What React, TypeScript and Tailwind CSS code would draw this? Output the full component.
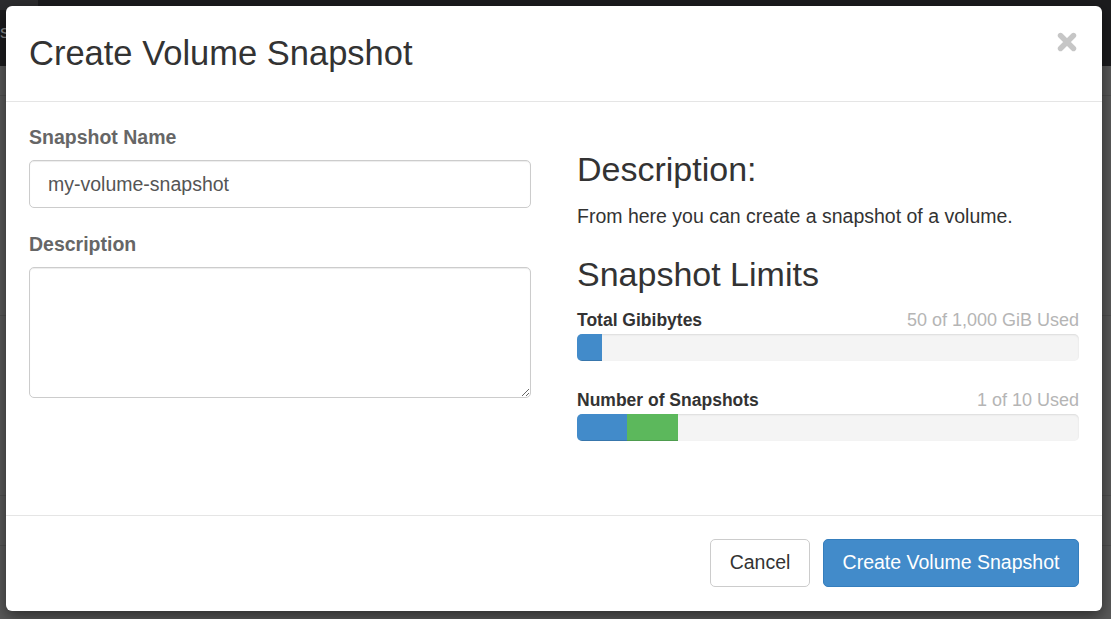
import React from "react";

function CloseIcon() {
  return (
    <svg width="20" height="20" viewBox="0 0 20 20" aria-hidden="true">
      <path d="M3.5 3.5 L16.5 16.5 M16.5 3.5 L3.5 16.5" stroke="#c6c6c6" strokeWidth="5.4" strokeLinecap="round" fill="none" />
    </svg>
  );
}

function Bar({ label, value, segs }: { label: string; value: string; segs: { w: number; c: string }[] }) {
  return (
    <div>
      <div className="flex items-baseline justify-between leading-[27px]">
        <span className="text-[17.5px] font-bold text-[#333]">{label}</span>
        <span className="text-[18px] text-[#b5b5b5]">{value}</span>
      </div>
      <div className="flex h-[27px] w-full overflow-hidden rounded-[5px] bg-[#f4f4f4] shadow-[inset_0_1px_2px_rgba(0,0,0,0.1)]">
        {segs.map((s, i) => (
          <div
            key={i}
            className="h-full shadow-[inset_0_-1px_0_rgba(0,0,0,0.15)]"
            style={{ width: `${s.w}px`, backgroundColor: s.c }}
          />
        ))}
      </div>
    </div>
  );
}

export default function App() {
  return (
    <div className="relative h-[619px] w-[1111px] overflow-hidden bg-[#595959] font-['Liberation_Sans',Arial,sans-serif]">
      {/* dimmed page behind the modal */}
      <div className="flex h-[66px] flex-col bg-[#1c1c1e]">
        <div className="flex h-[10px]">
          <div className="w-[38px] bg-[#2c2c2e]" />
        </div>
        <div className="pt-[12px] text-[19px] leading-[20px] text-[#8c8c8c]">s</div>
      </div>
      <div className="flex flex-col">
        <div className="h-[30px] border-b border-[#4f4f4f]" />
        <div className="h-[220px] border-b border-[#4f4f4f]" />
        <div className="h-[180px] border-b border-[#4f4f4f]" />
        <div className="h-[50px] border-b border-[#4f4f4f]" />
      </div>

      {/* modal overlay */}
      <div className="absolute left-[6px] top-[6px] flex h-[605px] w-[1096px] flex-col rounded-[6px] bg-white shadow-[0_5px_15px_rgba(0,0,0,0.5)]">
        <div className="flex h-[96px] shrink-0 items-start justify-between border-b border-[#e5e5e5] pl-[23px] pr-[25px]">
          <h4 className="pt-[27px] text-[34.5px] font-normal leading-[40px] text-[#333]">Create Volume Snapshot</h4>
          <button className="mt-[26px]">
            <CloseIcon />
          </button>
        </div>

        <div className="grid h-[413px] shrink-0 grid-cols-2 gap-x-[46px] px-[23px] pt-[21px]">
          <div>
            <label className="mb-[9px] block text-[19.5px] font-bold leading-[28px] text-[#666]">Snapshot Name</label>
            <input
              className="block h-[48px] w-full rounded-[5px] border border-[#ccc] px-[18px] text-[19.5px] text-[#555] shadow-[inset_0_1px_1px_rgba(0,0,0,0.075)] outline-none"
              defaultValue="my-volume-snapshot"
            />
            <label className="mb-[9px] mt-[22px] block text-[19.5px] font-bold leading-[28px] text-[#666]">Description</label>
            <textarea className="block h-[131px] w-full rounded-[5px] border border-[#ccc] px-[18px] py-[8px] text-[19.5px] text-[#555] shadow-[inset_0_1px_1px_rgba(0,0,0,0.075)] outline-none" />
          </div>

          <div>
            <h3 className="mb-[14px] mt-[28px] text-[34px] font-normal leading-[37px] text-[#333]">Description:</h3>
            <p className="text-[19.5px] leading-[28px] text-[#333]">From here you can create a snapshot of a volume.</p>
            <h3 className="mb-[14px] mt-[26px] text-[34px] font-normal leading-[37px] text-[#333]">Snapshot Limits</h3>
            <Bar label="Total Gibibytes" value="50 of 1,000 GiB Used" segs={[{ w: 25, c: "#428bca" }]} />
            <div className="mt-[26px]">
              <Bar
                label="Number of Snapshots"
                value="1 of 10 Used"
                segs={[
                  { w: 50, c: "#428bca" },
                  { w: 51, c: "#5cb85c" },
                ]}
              />
            </div>
          </div>
        </div>

        <div className="flex flex-1 items-start justify-end gap-[13px] border-t border-[#e5e5e5] p-[23px]">
          <button className="h-[48px] w-[100px] rounded-[5px] border border-[#ccc] bg-white text-[19.5px] text-[#333]">Cancel</button>
          <button className="h-[48px] w-[256px] rounded-[5px] border border-[#357ebd] bg-[#428bca] text-[19.5px] text-white">
            Create Volume Snapshot
          </button>
        </div>
      </div>
    </div>
  );
}
